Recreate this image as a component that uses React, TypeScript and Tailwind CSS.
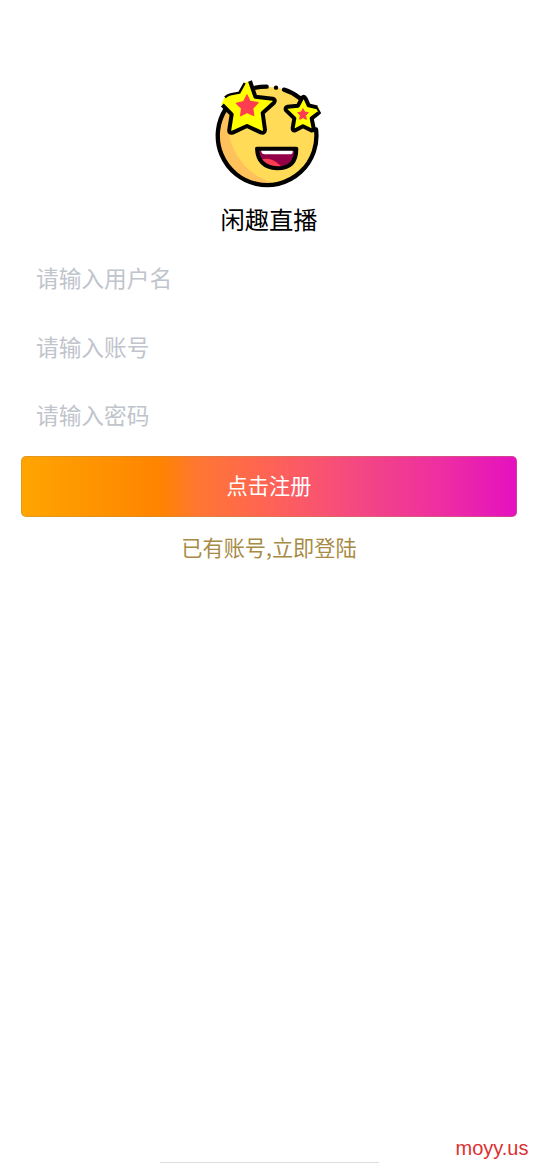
import { useState } from "react";

const FIELDS = [
  { name: "username", type: "text", placeholder: "请输入用户名" },
  { name: "account", type: "text", placeholder: "请输入账号" },
  { name: "password", type: "password", placeholder: "请输入密码" },
];

function StarFaceLogo() {
  return (
    <svg viewBox="0 0 390 375" className="ml-[2px] block h-[125px] w-[130px]" aria-hidden="true">
      <circle cx="186" cy="198" r="148" fill="#ffdb57" />
      {/* shaded lower left side */}
      <path
        d="M88 86 A148 148 0 0 0 218 342 A183 183 0 0 1 71 185 Q68 135 88 86 Z"
        fill="#ffc15c"
      />
      <g fill="none" stroke="#000" strokeWidth="13" strokeLinecap="round">
        <path d="M62 117 A148 148 0 1 0 333 178" />
        <path d="M148 54 Q166 50 185 50" />
        <path d="M213 53 h0.1" />
        <path d="M237 59 Q261 66 284 84" />
      </g>
      <g strokeLinejoin="round" strokeLinecap="butt">
        <path
          d="M122 36 H132 L151 80 L203 86 Q213 89 207 98 L173 129 L180 179 Q180 191 167 187 L126 168 L83 188 Q71 191 73 178 L80 133 L49 103 L58 83 Q66 76 76 74 L103 69 Z"
          fill="#ffff00"
        />
        {/* upper left edge is thinner than the rest of the outline */}
        <path d="M119 39 L103 68 L76 73 Q67 75 60 82" fill="none" stroke="#000" strokeWidth="7" />
        <path
          d="M135 33 L151 80 L203 86 Q213 89 207 98 L173 129 L180 179 Q180 191 167 187 L126 168 L83 188 Q71 191 73 178 L80 133 L52 105"
          fill="none"
          stroke="#000"
          strokeWidth="12"
        />
        <path
          d="M296 80 Q299 80 302 86 L311 106 L342 111 L341 126 L320 145 L326 175 Q326 183 318 181 L294 169 L271 181 Q262 183 263 174 L268 145 L244 122 Q238 113 248 110 L279 107 L290 86 Q293 80 296 80 Z"
          fill="#ffff00"
        />
        <path
          d="M341 129 L320 145 L326 175 Q326 183 318 181 L294 169 L271 181 Q262 183 263 174 L268 145 L244 122 Q238 113 248 110 L279 107 L290 86 Q296 75 302 86 L311 106 L337 112"
          fill="none"
          stroke="#000"
          strokeWidth="12"
        />
        <path d="M335 112 L345 129 L338 131" fill="none" stroke="#000" strokeWidth="6" />
        <path
          d="M126 75 L135 94 L159 98 L143 115 L146 136 L126 127 L107 137 L110 115 L94 100 L116 95 Z"
          fill="#ff3d50"
          stroke="#ff3d50"
          strokeWidth="4"
        />
        <path
          d="M294 116 L299 126 L310 128 L302 136 L304 148 L294 143 L284 148 L286 136 L278 128 L289 126 Z"
          fill="#ff3d50"
          stroke="#ff3d50"
          strokeWidth="3"
        />
      </g>
      <path d="M156 236 H274 Q274 295 216 295 Q159 292 156 236 Z" fill="#930047" />
      <path d="M166 270 Q197 256 230 290 Q190 302 166 270 Z" fill="#ff3d50" />
      <path d="M169 240 H263 V246 Q263 253 255 253 H179 Q171 253 169 246 Z" fill="#fff" />
      <path
        d="M156 236 H274 Q274 295 216 295 Q159 292 156 236 Z"
        fill="none"
        stroke="#000"
        strokeWidth="12"
        strokeLinejoin="round"
      />
    </svg>
  );
}

export default function App() {
  const [values, setValues] = useState<Record<string, string>>({});

  return (
    <div className="flex h-[1163px] w-full flex-col overflow-hidden bg-white font-['Noto_Sans_CJK_SC',sans-serif]">
      <header className="flex flex-col items-center pt-[70px]">
        <StarFaceLogo />
        <h1 className="mt-1 h-[46px] text-[24.3px] leading-10 text-black">闲趣直播</h1>
      </header>

      <form className="flex flex-col px-[21px]" onSubmit={(e) => e.preventDefault()}>
        {FIELDS.map((field) => (
          <input
            key={field.name}
            name={field.name}
            type={field.type}
            placeholder={field.placeholder}
            value={values[field.name] ?? ""}
            onChange={(e) => setValues({ ...values, [field.name]: e.target.value })}
            className="h-[68.5px] w-full px-[15px] pb-[3px] text-[22.7px] text-gray-800 outline-none placeholder:text-[#c0c4cc]"
          />
        ))}
        <button
          type="submit"
          className="mt-[5.5px] h-[61px] rounded-[5px] border border-[#b58a50]/40 bg-[linear-gradient(90deg,#ffa500_0%,#ff8400_28%,#ff7634_36%,#ff6355_50%,#f54c7c_65%,#ee2fa0_84%,#e511c0_100%)] bg-origin-border pb-[3px] text-[21.2px] text-white"
        >
          点击注册
        </button>
      </form>

      <a href="#login" className="mt-[10px] self-center text-[21.2px] leading-10 text-[#a78b45]">
        已有账号,立即登陆
      </a>

      <footer className="mt-auto">
        <p className="pr-[9.5px] text-right font-['Liberation_Sans',sans-serif] text-[20px] leading-7 text-[#dc3030]">
          moyy.us
        </p>
        <div className="mx-auto h-px w-[219px] bg-[#dedede]" />
      </footer>
    </div>
  );
}
